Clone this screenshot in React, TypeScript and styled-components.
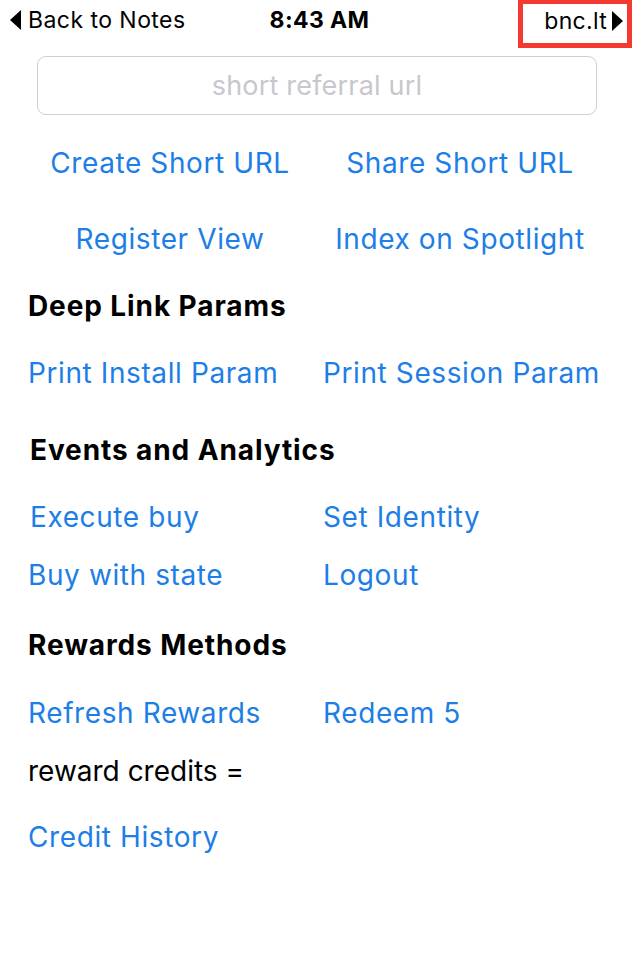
import React from "react";
import styled, { createGlobalStyle } from "styled-components";

const Global = createGlobalStyle`
  html, body { margin: 0; padding: 0; background: #fff; }
  body { font-family: Inter, Roboto, "Liberation Sans", sans-serif; -webkit-font-smoothing: antialiased; }
`;

const Screen = styled.div`
  width: 635px;
  height: 959px;
  background: #fff;
  overflow: hidden;
`;

const StatusBar = styled.div`
  height: 48px;
  display: grid;
  grid-template-columns: 1fr auto 1fr;
  align-items: start;
  font-size: 23px;
  color: #000;
`;

const BackItem = styled.div`
  display: flex;
  align-items: center;
  gap: 7px;
  height: 40px;
  padding-left: 10px;
  letter-spacing: 0.45px;
`;

const Time = styled.div`
  height: 40px;
  line-height: 40px;
  font-weight: 700;
  text-align: center;
  letter-spacing: 0.4px;
  padding-left: 4px;
`;

const RightCell = styled.div`
  display: flex;
  justify-content: flex-end;
  padding-right: 3px;
`;

const Highlight = styled.div`
  box-sizing: border-box;
  width: 114px;
  height: 49px;
  margin-top: -1px;
  border: 5px solid #f43a30;
  display: flex;
  align-items: center;
  justify-content: flex-end;
  gap: 5px;
  padding: 0 4px 6px 0;
  letter-spacing: 0.3px;
`;

const Triangle = styled.svg`
  display: block;
  flex: none;
`;

const Field = styled.div`
  box-sizing: border-box;
  margin: 8px 0 0 37px;
  width: 560px;
  height: 59px;
  border: 1.5px solid #cfcfd3;
  border-radius: 9px;
  display: flex;
  align-items: center;
  justify-content: center;
  color: #c7c7cd;
  font-size: 27px;
  letter-spacing: 0.2px;
`;

const Content = styled.div`
  display: flex;
  flex-direction: column;
`;

const Row = styled.div<{ $mt: number; $center?: boolean }>`
  margin-top: ${(p) => p.$mt}px;
  padding-left: 28px;
  display: grid;
  grid-template-columns: 284px 274px;
  column-gap: 11px;
  text-align: ${(p) => (p.$center ? "center" : "left")};
`;

const Link = styled.span<{ $indent?: number }>`
  display: block;
  height: 40px;
  line-height: 40px;
  font-size: 28px;
  letter-spacing: 0.6px;
  color: #1c7ee6;
  padding-left: ${(p) => p.$indent || 0}px;
  white-space: nowrap;
`;

const Heading = styled.div<{ $mt: number; $indent?: number }>`
  margin-top: ${(p) => p.$mt}px;
  padding-left: ${(p) => 28 + (p.$indent || 0)}px;
  height: 40px;
  line-height: 40px;
  font-size: 28px;
  font-weight: 700;
  letter-spacing: 0.9px;
  color: #000;
`;

const Plain = styled.div<{ $mt: number }>`
  margin-top: ${(p) => p.$mt}px;
  padding-left: 28px;
  height: 40px;
  line-height: 40px;
  font-size: 28px;
  color: #000;
`;

export default function App() {
  return (
    <Screen>
      <Global />
      <StatusBar>
        <BackItem>
          <Triangle width="11" height="20" viewBox="0 0 11 20">
            <path d="M11 0 L0 10 L11 20 Z" fill="#000" />
          </Triangle>
          <span>Back to Notes</span>
        </BackItem>
        <Time>8:43 AM</Time>
        <RightCell>
          <Highlight>
            <span>bnc.lt</span>
            <Triangle width="11" height="20" viewBox="0 0 11 20">
              <path d="M0 0 L11 10 L0 20 Z" fill="#000" />
            </Triangle>
          </Highlight>
        </RightCell>
      </StatusBar>
      <Field>short referral url</Field>
      <Content>
        <Row $mt={28} $center>
          <Link>Create Short URL</Link>
          <Link>Share Short URL</Link>
        </Row>
        <Row $mt={36} $center>
          <Link>Register View</Link>
          <Link>Index on Spotlight</Link>
        </Row>
        <Heading $mt={27}>Deep Link Params</Heading>
        <Row $mt={27}>
          <Link>Print Install Param</Link>
          <Link>Print Session Param</Link>
        </Row>
        <Heading $mt={37} $indent={2}>Events and Analytics</Heading>
        <Row $mt={27}>
          <Link $indent={2}>Execute buy</Link>
          <Link>Set Identity</Link>
        </Row>
        <Row $mt={18}>
          <Link>Buy with state</Link>
          <Link>Logout</Link>
        </Row>
        <Heading $mt={30}>Rewards Methods</Heading>
        <Row $mt={28}>
          <Link>Refresh Rewards</Link>
          <Link>Redeem 5</Link>
        </Row>
        <Plain $mt={18}>reward credits =</Plain>
        <Row $mt={26}>
          <Link>Credit History</Link>
        </Row>
      </Content>
    </Screen>
  );
}
